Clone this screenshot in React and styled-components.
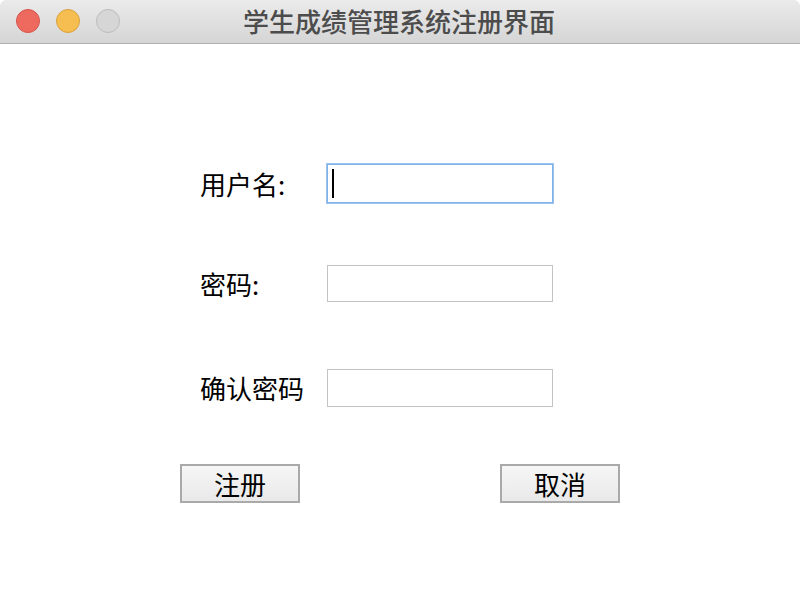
import React from "react";
import styled, { createGlobalStyle } from "styled-components";

const Global = createGlobalStyle`
  html, body { margin: 0; padding: 0; background: #ffffff; }
  body { font-family: "Noto Sans CJK SC", "Noto Sans", sans-serif; }
  #root { width: 800px; height: 600px; }
`;

const Window = styled.div`
  width: 800px;
  height: 600px;
  display: flex;
  flex-direction: column;
  background: #ffffff;
  overflow: hidden;
`;

const TitleBar = styled.div`
  position: relative;
  height: 43px;
  flex: 0 0 43px;
  display: flex;
  align-items: center;
  justify-content: center;
  background: linear-gradient(#ebebeb, #d5d5d5);
  border-bottom: 1px solid #b1b1b1;
  border-radius: 6px 6px 0 0;
`;

const Lights = styled.div`
  position: absolute;
  left: 16px;
  top: 9px;
  display: flex;
  gap: 16px;
`;

const Light = styled.span`
  width: 22px;
  height: 22px;
  border-radius: 50%;
  background: ${(p) => p.$bg};
  border: 1px solid ${(p) => p.$bd};
`;

const Title = styled.div`
  font-size: 26px;
  font-weight: 500;
  color: #4c4c4c;
  line-height: 1;
  margin-left: -2px;
  margin-top: -2px;
`;

const Content = styled.div`
  flex: 1;
  display: flex;
  flex-direction: column;
  padding-top: 120px;
`;

const Row = styled.div`
  display: flex;
  align-items: center;
  margin-top: ${(p) => p.$mt || 0}px;
  padding-left: 200px;
`;

const Label = styled.label`
  width: 127px;
  font-size: 26px;
  color: #000;
  line-height: 1;
`;

const Field = styled.div`
  position: relative;
  box-sizing: border-box;
  width: 226px;
  height: ${(p) => p.$h}px;
  background: #fff;
  border: 1px solid ${(p) => (p.$focus ? "#7eb2ea" : "#c3c3c3")};
  box-shadow: ${(p) => (p.$focus ? "0 0 0 1px #9cc3ee" : "none")};
`;

const Caret = styled.span`
  position: absolute;
  left: 4px;
  top: 4px;
  bottom: 4px;
  width: 2px;
  background: #000;
`;

const ButtonRow = styled.div`
  display: flex;
  gap: 200px;
  padding-left: 180px;
  margin-top: 57px;
`;

const Button = styled.button`
  box-sizing: border-box;
  width: 120px;
  height: 39px;
  padding: 0;
  border: 2px solid #a9a9a9;
  background: linear-gradient(#f6f6f6, #e9e9e9);
  font-family: "Noto Sans CJK SC", "Noto Sans", sans-serif;
  font-size: 26px;
  line-height: 1;
  color: #000;
`;

export default function App() {
  return (
    <>
      <Global />
      <Window>
        <TitleBar>
          <Lights>
            <Light $bg="#ee6a5f" $bd="#d6544a" />
            <Light $bg="#f6be50" $bd="#d9a13f" />
            <Light $bg="#d6d6d6" $bd="#bcbcbc" />
          </Lights>
          <Title>学生成绩管理系统注册界面</Title>
        </TitleBar>
        <Content>
          <Row>
            <Label>用户名:</Label>
            <Field $h={39} $focus>
              <Caret />
            </Field>
          </Row>
          <Row $mt={62}>
            <Label>密码:</Label>
            <Field $h={37} />
          </Row>
          <Row $mt={67}>
            <Label>确认密码</Label>
            <Field $h={38} />
          </Row>
          <ButtonRow>
            <Button>注册</Button>
            <Button>取消</Button>
          </ButtonRow>
        </Content>
      </Window>
    </>
  );
}
